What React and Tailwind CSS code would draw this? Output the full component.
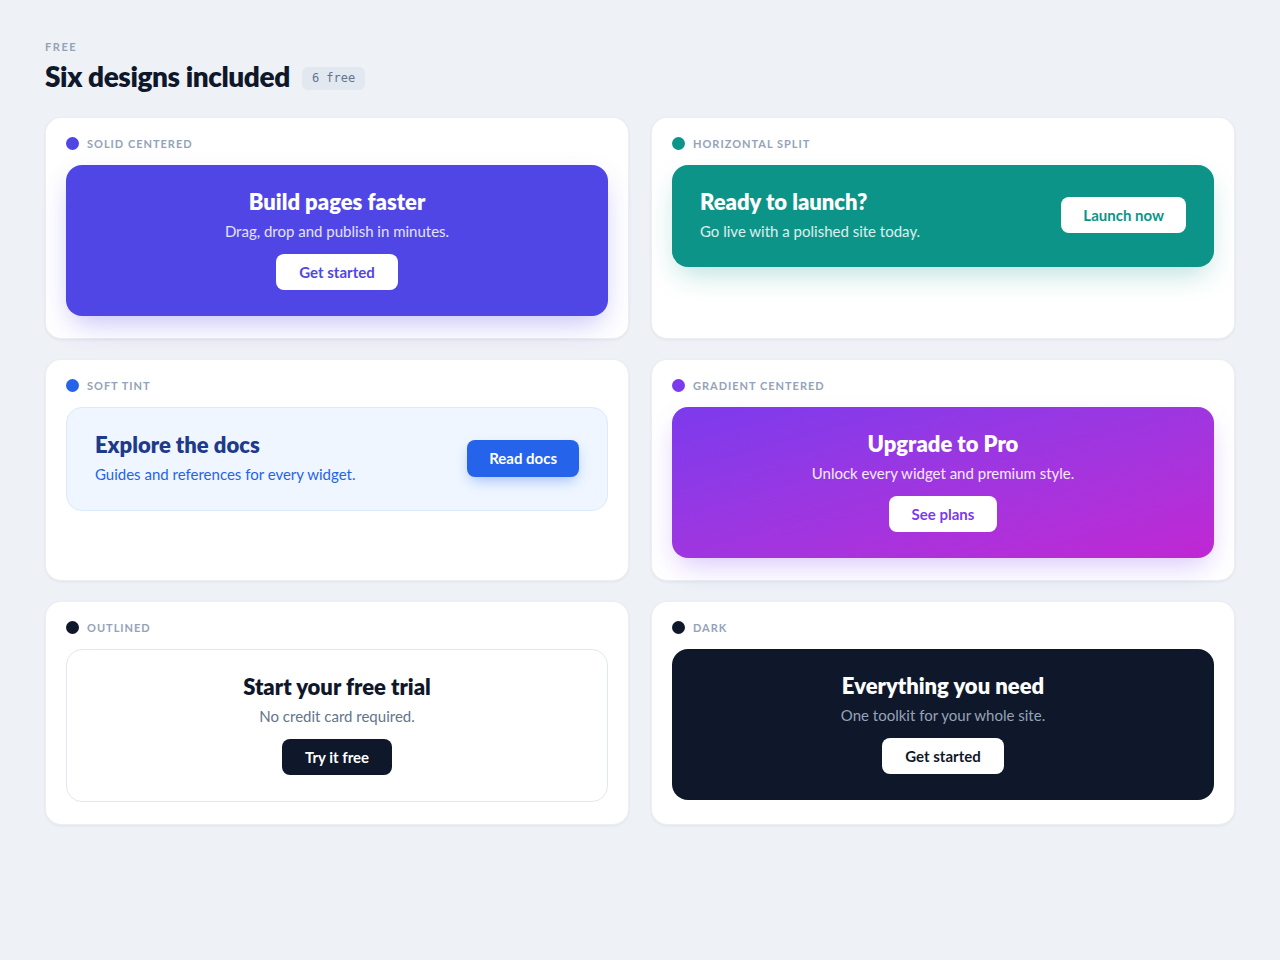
import React from 'react';

const font = { fontFamily: 'Lato, "Noto Sans", sans-serif' };

const Card = ({ dot, label, children }) => (
    <div className="bg-white rounded-2xl border border-[#e2e8f0]/70 shadow-[0_1px_3px_rgba(15,23,42,0.06)] px-5 pt-[18px] pb-[22px] flex flex-col">
        <div className="flex items-center gap-2 h-[14px]">
            <span className="w-[13px] h-[13px] rounded-full" style={{ backgroundColor: dot }}></span>
            <span className="text-[11px] font-bold tracking-[0.09em] text-[#94a3b8] uppercase leading-none">{label}</span>
        </div>
        <div className="mt-[15px]">{children}</div>
    </div>
);

const Centered = ({ wrap, title, titleColor, sub, subColor, btn, btnClass }) => (
    <div className={`rounded-2xl pt-[23px] pb-[26px] px-7 flex flex-col items-center text-center ${wrap}`}>
        <h3 className={`text-[22px] font-extrabold leading-7 ${titleColor}`}>{title}</h3>
        <p className={`mt-1 text-[15px] leading-[22px] ${subColor}`}>{sub}</p>
        <button className={`mt-3 h-9 px-[23px] rounded-lg text-[15px] font-bold ${btnClass}`}>{btn}</button>
    </div>
);

const Split = ({ wrap, title, titleColor, sub, subColor, btn, btnClass }) => (
    <div className={`rounded-2xl pt-[23px] pb-[25px] px-7 flex items-center justify-between ${wrap}`}>
        <div>
            <h3 className={`text-[22px] font-extrabold leading-7 ${titleColor}`}>{title}</h3>
            <p className={`mt-1 text-[15px] leading-[22px] ${subColor}`}>{sub}</p>
        </div>
        <button className={`h-9 px-[22px] rounded-lg text-[15px] font-bold ${btnClass}`}>{btn}</button>
    </div>
);

export default function App() {
    return (
        <div className="min-h-screen bg-[#eef1f6] px-[45px] pt-[41px] pb-16" style={font}>
            <div className="text-[11px] font-bold tracking-[0.14em] text-[#94a3b8] leading-none">FREE</div>
            <div className="mt-[6px] flex items-center gap-3">
                <h1 className="text-[28px] font-extrabold text-[#0f172a] leading-9 tracking-[-0.015em]">Six designs included</h1>
                <span className="mt-1 px-[10px] h-[23px] flex items-center rounded-md bg-[#e2e8f0] text-[#64748b] text-[12px]" style={{ fontFamily: '"DejaVu Sans Mono", "Liberation Mono", monospace' }}>6 free</span>
            </div>

            <div className="mt-[23px] grid grid-cols-2 gap-x-[22px] gap-y-[20px] w-[1190px]">
                <Card dot="#4f46e5" label="Solid centered">
                    <Centered
                        wrap="bg-[#4f46e5] shadow-[0_12px_28px_-6px_rgba(79,70,229,0.35)]"
                        title="Build pages faster" titleColor="text-white"
                        sub="Drag, drop and publish in minutes." subColor="text-white/85"
                        btn="Get started" btnClass="bg-white text-[#4f46e5]"
                    />
                </Card>
                <Card dot="#0d9488" label="Horizontal split">
                    <Split
                        wrap="bg-[#0d9488] shadow-[0_12px_28px_-6px_rgba(13,148,136,0.3)]"
                        title="Ready to launch?" titleColor="text-white"
                        sub="Go live with a polished site today." subColor="text-white/85"
                        btn="Launch now" btnClass="bg-white text-[#0d9488]"
                    />
                </Card>
                <Card dot="#2563eb" label="Soft tint">
                    <Split
                        wrap="bg-[#eff6ff] border border-[#dbeafe]"
                        title="Explore the docs" titleColor="text-[#1e3a8a]"
                        sub="Guides and references for every widget." subColor="text-[#2563eb]"
                        btn="Read docs" btnClass="h-[37px] bg-[#2563eb] text-white shadow-[0_6px_14px_-3px_rgba(37,99,235,0.4)]"
                    />
                </Card>
                <Card dot="#7c3aed" label="Gradient centered">
                    <Centered
                        wrap="bg-gradient-to-br from-[#7c3aed] to-[#c026d3] shadow-[0_12px_28px_-6px_rgba(124,58,237,0.3)]"
                        title="Upgrade to Pro" titleColor="text-white"
                        sub="Unlock every widget and premium style." subColor="text-white/90"
                        btn="See plans" btnClass="bg-white text-[#7c3aed]"
                    />
                </Card>
                <Card dot="#0f172a" label="Outlined">
                    <Centered
                        wrap="bg-white border border-[#e2e8f0]"
                        title="Start your free trial" titleColor="text-[#0f172a]"
                        sub="No credit card required." subColor="text-[#64748b]"
                        btn="Try it free" btnClass="bg-[#0f172a] text-white"
                    />
                </Card>
                <Card dot="#0f172a" label="Dark">
                    <Centered
                        wrap="bg-[#0f172a]"
                        title="Everything you need" titleColor="text-white"
                        sub="One toolkit for your whole site." subColor="text-[#94a3b8]"
                        btn="Get started" btnClass="bg-white text-[#0f172a]"
                    />
                </Card>
            </div>
        </div>
    );
}
